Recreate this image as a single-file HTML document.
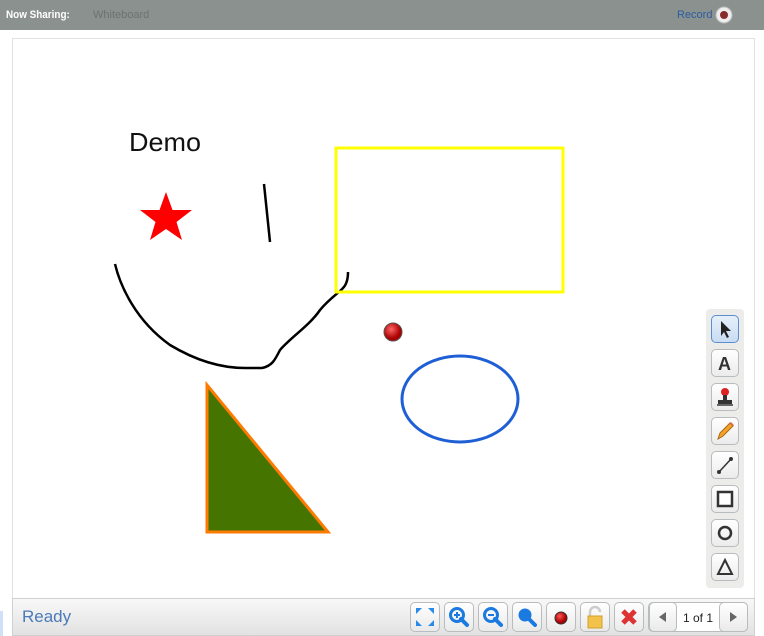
<!DOCTYPE html>
<html><head><style>
*{margin:0;padding:0;box-sizing:border-box}
body{width:764px;height:636px;background:#fff;font-family:"Liberation Sans",sans-serif;position:relative;overflow:hidden}
.top{position:absolute;left:0;top:0;width:764px;height:30px;background:#8b918f}
.top .a{position:absolute;left:6px;top:9px;font-size:11px;font-weight:bold;color:#fff;transform:scaleX(.9);transform-origin:left}
.top .b{position:absolute;left:93px;top:9px;font-size:11px;color:#6d7270}
.top .r{position:absolute;left:677px;top:9px;font-size:11px;color:#2a5da0}
.canvas{position:absolute;left:12px;top:38px;width:743px;height:561px;border:1px solid #e2e2e2;background:#fff}
.bot{position:absolute;left:12px;top:598px;width:743px;height:38px;border:1px solid #d0d0d0;background:linear-gradient(#f8f8f8,#e2e2e2)}
.ready{position:absolute;left:22px;top:607px;font-size:17px;color:#4a7ab8}
.btn{position:absolute;width:30px;height:30px;border:1px solid #b8bcbc;border-radius:5px;background:linear-gradient(#fff,#eaeaea)}
.tb{position:absolute;left:706px;top:309px;width:38px;height:279px;background:#ececea;border-radius:4px}
.tbtn{position:absolute;left:711px;width:28px;height:28px;border:1px solid #b8bcbc;border-radius:5px;background:linear-gradient(#fff,#ebebeb)}
.pager{position:absolute;left:648px;top:602px;width:100px;height:30px;border:1px solid #b8bcbc;border-radius:5px;background:#fff}
</style></head><body>
<div class="top"><span class="a">Now Sharing:</span><span class="b">Whiteboard</span><span class="r">Record</span>
<svg style="position:absolute;left:715px;top:6px" width="18" height="18"><circle cx="9" cy="9" r="8" fill="#eee" stroke="#bbb"/><circle cx="9" cy="9" r="4" fill="#8a2a2a"/></svg></div>
<div class="canvas"></div>
<svg style="position:absolute;left:0;top:0" width="764" height="636">
<text x="129" y="151" font-family="Liberation Sans" font-size="26" fill="#111" textLength="72" lengthAdjust="spacingAndGlyphs">Demo</text>
<polygon points="166,192 172.5,210 192,210 176.5,222 182,240 166,229 150,240 155.5,222 140,210 159.5,210" fill="#f00"/>
<line x1="264" y1="184" x2="270" y2="242" stroke="#000" stroke-width="2.5"/>
<path d="M115,264 C120,285 135,320 170,345 C195,360 220,368 245,368 L262,368 C272,366 275,360 280,350 C290,338 310,325 320,310 C330,298 340,292 343,288 C347,284 348,278 348,272" fill="none" stroke="#000" stroke-width="2.5"/>
<rect x="336" y="148" width="227" height="144" fill="none" stroke="#ff0" stroke-width="3"/>
<defs><radialGradient id="rg" cx="40%" cy="35%"><stop offset="0" stop-color="#f66"/><stop offset="1" stop-color="#a00"/></radialGradient></defs>
<circle cx="393" cy="332" r="9" fill="url(#rg)" stroke="#555"/>
<ellipse cx="460" cy="399" rx="58" ry="43" fill="none" stroke="#1f5fd6" stroke-width="3"/>
<polygon points="207,385 207,532 328,532" fill="#467400" stroke="#ff7a00" stroke-width="3"/>
</svg>
<div class="tb"></div>
<div class="tbtn" style="top:315px;border-color:#5a8fd0;background:linear-gradient(#e6f0fb,#c8dcf3)"><svg width="26" height="26"><path d="M9,5 L9,20 L12,16 L15,22 L17,21 L14,15 L19,15 Z" fill="#222"/></svg></div>
<div class="tbtn" style="top:349px"><svg width="26" height="26"><text x="6" y="20" font-size="18" font-weight="bold" font-family="Liberation Sans" fill="#333">A</text></svg></div>
<div class="tbtn" style="top:383px"><svg width="26" height="26"><circle cx="13" cy="8" r="4" fill="#d22"/><rect x="11" y="11" width="4" height="5" fill="#333"/><rect x="6" y="16" width="14" height="4" fill="#333"/><rect x="5" y="20" width="16" height="2" fill="#666"/></svg></div>
<div class="tbtn" style="top:417px"><svg width="26" height="26"><path d="M6,21 L8,15 L18,5 L21,8 L11,18 Z" fill="#f4a22a" stroke="#a56a10"/><path d="M18,5 L21,8 L22,7 L19,4Z" fill="#e66"/></svg></div>
<div class="tbtn" style="top:451px"><svg width="26" height="26"><line x1="7" y1="20" x2="19" y2="7" stroke="#333" stroke-width="1.5"/><circle cx="7" cy="20" r="2" fill="#333"/><circle cx="19" cy="7" r="2" fill="#333"/></svg></div>
<div class="tbtn" style="top:485px"><svg width="26" height="26"><rect x="6" y="6" width="14" height="14" fill="#fff" stroke="#333" stroke-width="2.5"/></svg></div>
<div class="tbtn" style="top:519px"><svg width="26" height="26"><circle cx="13" cy="13" r="6" fill="none" stroke="#333" stroke-width="2.5"/></svg></div>
<div class="tbtn" style="top:553px"><svg width="26" height="26"><polygon points="13,6 20,20 6,20" fill="none" stroke="#333" stroke-width="2"/></svg></div>
<div class="bot"></div>
<div style="position:absolute;left:0;top:611px;width:3px;height:25px;background:#cfe0f7"></div>
<div class="ready">Ready</div>
<div class="btn" style="left:410px;top:602px"><svg width="28" height="28" fill="#2a8ae8"><path d="M5,5 L11,5 L5,11Z M23,5 L17,5 L23,11Z M5,23 L11,23 L5,17Z M23,23 L17,23 L23,17Z"/></svg></div>
<div class="btn" style="left:444px;top:602px"><svg width="28" height="28"><circle cx="12" cy="12" r="6.5" fill="none" stroke="#1a7ae0" stroke-width="3"/><line x1="16" y1="16" x2="22" y2="22" stroke="#1a7ae0" stroke-width="4" stroke-linecap="round"/><path d="M9,12h6M12,9v6" stroke="#1a7ae0" stroke-width="2"/></svg></div>
<div class="btn" style="left:478px;top:602px"><svg width="28" height="28"><circle cx="12" cy="12" r="6.5" fill="none" stroke="#1a7ae0" stroke-width="3"/><line x1="16" y1="16" x2="22" y2="22" stroke="#1a7ae0" stroke-width="4" stroke-linecap="round"/><path d="M9,12h6" stroke="#1a7ae0" stroke-width="2"/></svg></div>
<div class="btn" style="left:512px;top:602px"><svg width="28" height="28"><circle cx="12" cy="12" r="6.5" fill="#1a7ae0"/><line x1="16" y1="16" x2="22" y2="22" stroke="#1a7ae0" stroke-width="4" stroke-linecap="round"/></svg></div>
<div class="btn" style="left:546px;top:602px"><svg width="28" height="28"><circle cx="14" cy="15" r="6" fill="url(#rg2)" stroke="#333"/><defs><radialGradient id="rg2" cx="40%" cy="35%"><stop offset="0" stop-color="#f55"/><stop offset="1" stop-color="#a00"/></radialGradient></defs></svg></div>
<div class="btn" style="left:580px;top:602px"><svg width="28" height="28"><path d="M9,13 V9 a5,5 0 0 1 10,0" fill="none" stroke="#ccc" stroke-width="2.5"/><rect x="7" y="13" width="14" height="12" fill="#f2c24a" stroke="#d0a030"/></svg></div>
<div class="btn" style="left:614px;top:602px"><svg width="28" height="28"><path d="M8,8 L20,20 M20,8 L8,20" stroke="#d33" stroke-width="5"/></svg></div>
<div class="pager"><div style="position:absolute;left:0;top:-1px;width:28px;height:30px;border:1px solid #b8bcbc;border-radius:5px;background:linear-gradient(#fff,#eaeaea)"><svg width="26" height="28"><polygon points="9,14 16,9 16,19" fill="#666"/></svg></div>
<span style="position:absolute;left:34px;top:8px;font-size:12px;color:#222">1 of 1</span>
<div style="position:absolute;left:70px;top:-1px;width:29px;height:30px;border:1px solid #b8bcbc;border-radius:5px;background:linear-gradient(#fff,#eaeaea)"><svg width="26" height="28"><polygon points="17,14 10,9 10,19" fill="#666"/></svg></div></div>
</body></html>
